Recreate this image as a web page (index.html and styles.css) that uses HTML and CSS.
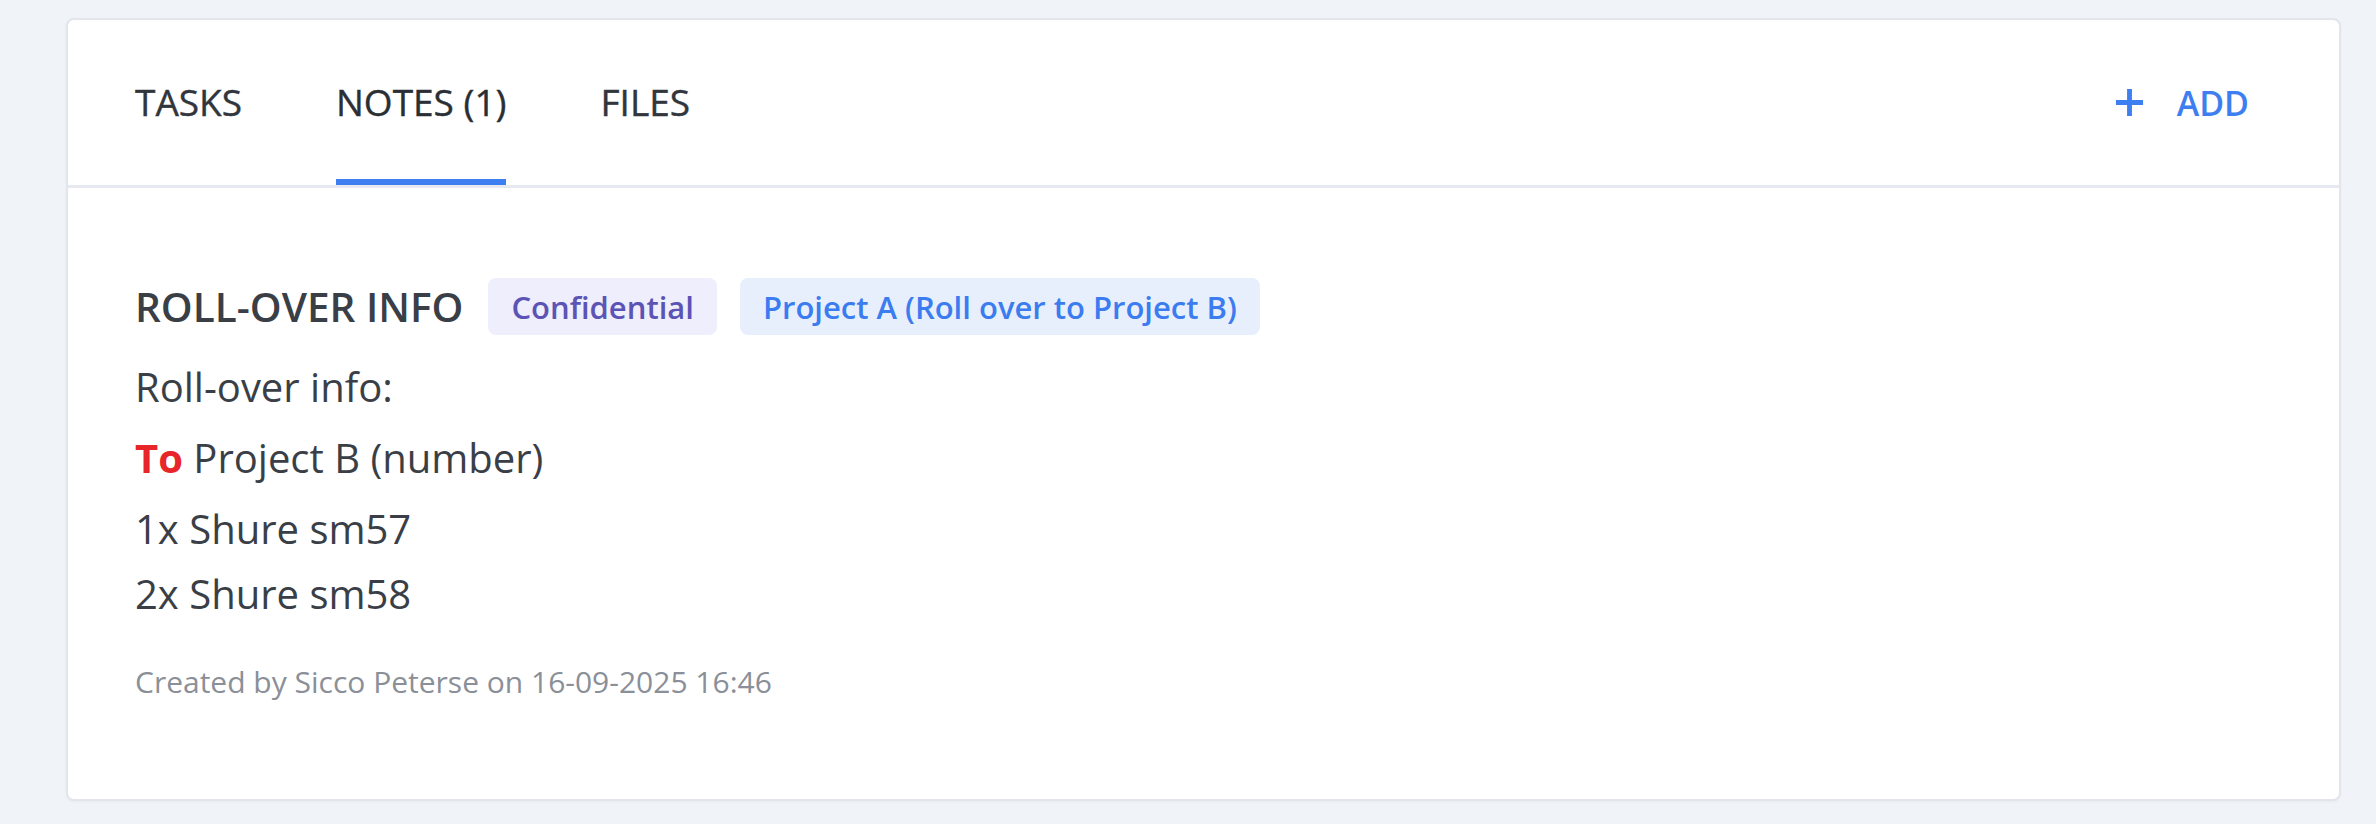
FILE: index.html
```html
<!DOCTYPE html>
<html lang="en">
<head>
    <meta charset="UTF-8">
    <meta name="viewport" content="width=device-width, initial-scale=1.0">
    <link rel="stylesheet" href="styles.css">
</head>
<body>
    <div class="card">
        <div class="card-header">
            <ul class="tabs">
                <li class="tab">TASKS</li>
                <li class="tab active">NOTES (1)</li>
                <li class="tab">FILES</li>
            </ul>
            <button class="add-btn">
                <svg class="add-icon" viewBox="0 0 32 32" width="32" height="32">
                    <path d="M16 2v28M2 16h28" stroke="currentColor" stroke-width="5" stroke-linecap="butt" fill="none"/>
                </svg>
                <span>ADD</span>
            </button>
        </div>

        <div class="card-body">
            <div class="note-head">
                <h3 class="note-title">ROLL-OVER INFO</h3>
                <span class="badge badge-purple">Confidential</span>
                <span class="badge badge-blue">Project A (Roll over to Project B)</span>
            </div>
            <p>Roll-over info:</p>
            <p><strong class="red">To</strong> Project B (number)</p>
            <p>1x Shure sm57<br>2x Shure sm58</p>
            <div class="note-meta">Created by Sicco Peterse on 16-09-2025 16:46</div>
        </div>
    </div>
</body>
</html>
```

FILE: styles.css
```css
body {
    font-family: 'Open Sans', 'Noto Sans', Arial, sans-serif;
    background-color: #f0f3f8;
    color: #3a3f47;
    margin: 0;
    padding: 18px 35px 24px 66px;
}

.card {
    background-color: #ffffff;
    border: 2px solid #e2e6ec;
    border-radius: 8px;
    box-shadow: 0 1px 3px rgba(0, 0, 0, 0.04);
}

.card-header {
    display: flex;
    justify-content: space-between;
    align-items: stretch;
    height: 165px;
    padding: 0 90px 0 67px;
    border-bottom: 3px solid #e6e9ef;
}

.tabs {
    display: flex;
    gap: 94px;
    list-style: none;
    margin: 0;
    padding: 0;
}

.tab {
    display: flex;
    align-items: center;
    padding-top: 3px;
    border-bottom: 6px solid transparent;
    font-size: 37px;
    font-weight: 500;
    color: #31353c;
    cursor: pointer;
    -webkit-text-stroke: 0.4px currentColor;
}

.tab.active {
    color: #2a2e35;
    border-bottom-color: #3d7ef0;
}

.add-btn {
    display: flex;
    align-items: center;
    gap: 32px;
    padding: 0;
    background: transparent;
    border: none;
    color: #3d7ef0;
    font-family: inherit;
    font-size: 34px;
    font-weight: 600;
    cursor: pointer;
}

.add-icon {
    width: 31px;
    height: 31px;
}

.card-body {
    padding: 90px 67px 97px;
}

.note-head {
    display: flex;
    align-items: center;
    height: 57px;
    margin-bottom: 19px;
}

.note-title {
    margin: 0 25px 0 0;
    font-size: 40.5px;
    font-weight: 600;
    color: #3a3f47;
}

.badge {
    display: flex;
    align-items: center;
    height: 57px;
    padding: 0 23px;
    margin-right: 23px;
    border-radius: 8px;
    font-size: 31px;
    font-weight: 600;
}

.badge-purple {
    background-color: #efeefc;
    color: #5b54b5;
}

.badge-blue {
    background-color: #e7effc;
    color: #3b7cf0;
}

p {
    margin: 0 0 6px;
    font-size: 40px;
    line-height: 65px;
}

.red {
    color: #e8262a;
    font-weight: 700;
}

.note-meta {
    margin-top: 36px;
    font-size: 30px;
    line-height: 40px;
    color: #8a8f98;
}
```
